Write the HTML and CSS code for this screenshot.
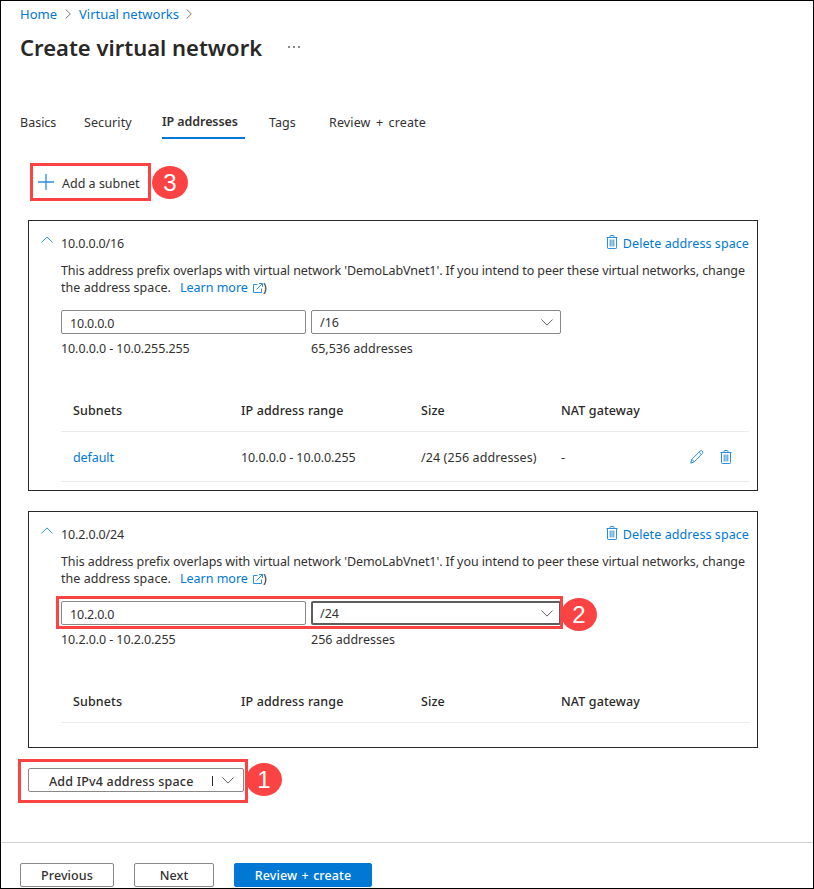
FILE: index.html
```html
<!DOCTYPE html>
<html lang="en">
<head>
<meta charset="utf-8">
<title>Create virtual network</title>
<link rel="stylesheet" href="styles.css">
</head>
<body>
<svg class="defs" width="0" height="0" aria-hidden="true">
  <symbol id="trash" viewBox="0 0 12 14"><path d="M.5 2.500h11M4 2.300V1.200q0-.7.7-.7h2.600q.7 0 .7.7v1.100M1.500 2.500v10.300q0 .7.7.7h7.600q.7 0 .7-.7V2.500M4.200 4.500v7M6 4.500v7M7.800 4.500v7"/></symbol>
  <symbol id="pencil" viewBox="0 0 14 14"><path d="M.8 13.200l1-3.900L10 1.100q1.200-1 2.300.1 1 1.100 0 2.300L4.200 11.900zM8.900 2.200l2.700 2.700M1.800 9.300l2.500 2.500"/></symbol>
  <symbol id="down" viewBox="0 0 12 7"><path d="M.4.500L6 6.100 11.600.5"/></symbol>
  <symbol id="up" viewBox="0 0 12 7"><path d="M.4 6.500L6 .9l5.600 5.600"/></symbol>
  <symbol id="right" viewBox="0 0 6 10"><path d="M.7.500L5.300 5 .7 9.500"/></symbol>
  <symbol id="external" viewBox="0 0 10 10"><path d="M4.500 1.500h-4v8h8V5.500M3.500 6.500l6-6M6 .5h3.500V4"/></symbol>
</svg>
<div class="page">
  <nav class="crumbs"><a class="c-home">Home</a><svg class="sep"><use href="#right"/></svg><a class="c-vnet">Virtual networks</a><svg class="sep"><use href="#right"/></svg></nav>
  <header class="heading"><h1>Create virtual network</h1><span class="more"><i></i><i></i><i></i></span></header>
  <div class="tabs">
    <span class="tab t1">Basics</span><span class="tab t2">Security</span><span class="tab t3 active">IP addresses</span><span class="tab t4">Tags</span><span class="tab t5">Review + create</span>
  </div>
  <div class="add-subnet callout"><svg class="plus" viewBox="0 0 16 16"><path d="M8 0v16M0 8h16"/></svg><span>Add a subnet</span><b class="badge b3">3</b></div>

  <section class="card first">
    <div class="card-head"><svg class="up"><use href="#up"/></svg><span class="prefix">10.0.0.0/16</span><a class="delete"><svg class="trash"><use href="#trash"/></svg><span>Delete address space</span></a></div>
    <p class="warning"><span class="w1">This address prefix overlaps with virtual network 'DemoLabVnet1'. If you intend to peer these virtual networks, change</span><br><span class="w2">the address space.</span><a>Learn more</a><svg class="external"><use href="#external"/></svg>)</p>
    <div class="fields"><div class="field address">10.0.0.0</div><div class="field size"><span>/16</span><svg class="down"><use href="#down"/></svg></div></div>
    <div class="hints"><span class="range">10.0.0.0 - 10.0.255.255</span><span>65,536 addresses</span></div>
    <div class="row head"><span>Subnets</span><span>IP address range</span><span>Size</span><span>NAT gateway</span></div>
    <div class="row data"><a class="range">default</a><span class="range">10.0.0.0 - 10.0.0.255</span><span class="sz">/24 (256 addresses)</span><span>-</span><svg class="pencil"><use href="#pencil"/></svg><svg class="trash"><use href="#trash"/></svg></div>
  </section>

  <section class="card second">
    <div class="card-head"><svg class="up"><use href="#up"/></svg><span class="prefix">10.2.0.0/24</span><a class="delete"><svg class="trash"><use href="#trash"/></svg><span>Delete address space</span></a></div>
    <p class="warning"><span class="w1">This address prefix overlaps with virtual network 'DemoLabVnet1'. If you intend to peer these virtual networks, change</span><br><span class="w2">the address space.</span><a>Learn more</a><svg class="external"><use href="#external"/></svg>)</p>
    <div class="fields"><div class="field address">10.2.0.0</div><div class="field size focus"><span>/24</span><svg class="down"><use href="#down"/></svg></div><div class="outline"></div><b class="badge b2">2</b></div>
    <div class="hints"><span class="range">10.2.0.0 - 10.2.0.255</span><span>256 addresses</span></div>
    <div class="row head"><span>Subnets</span><span>IP address range</span><span>Size</span><span>NAT gateway</span></div>
  </section>

  <div class="add-space callout"><div class="split"><span>Add IPv4 address space</span><i></i><svg class="down"><use href="#down"/></svg></div><b class="badge b1">1</b></div>
  <footer><button class="prev">Previous</button><button class="next">Next</button><button class="primary">Review + create</button></footer>
</div>
</body>
</html>
```
FILE: styles.css
```css
* { box-sizing: border-box; }
body { margin: 0; background: #fff; }
.defs { position: absolute; }
.page { width: 814px; height: 889px; border: 1px solid #000; overflow: hidden; font: 12.5px/20px "Noto Sans", "Open Sans", sans-serif; color: #323130; white-space: nowrap; }
svg { fill: none; stroke: #2b8fdd; stroke-width: 1; flex: none; }
a { color: #0078d4; }

.crumbs { display: flex; align-items: center; padding: 3px 0 0 19px; height: 23px; font-size: 13px; }
.c-home { width: 45px; }
.c-vnet { width: 107px; margin-left: 8px; }
.sep { width: 6px; height: 10px; stroke: #777; }
.heading { display: flex; align-items: center; height: 46px; padding-left: 19px; }
h1 { margin: 0; width: 268px; font-size: 22px; line-height: 32px; font-weight: 600; color: #292827; }
.more { display: flex; gap: 3px; }
.more i { width: 2px; height: 2px; background: #8a8a8a; }

.tabs { display: flex; height: 28px; margin-top: 41px; padding-left: 19px; }
.t1 { width: 64px; }
.t2 { width: 78px; letter-spacing: .1px; }
.t3 { width: 83px; margin-right: 24px; letter-spacing: -.08px; }
.t4 { width: 60px; }
.t5 { word-spacing: 2px; letter-spacing: .13px; }
.tab { padding-top: 2px; }
.tab.active { padding-top: 1px; font-weight: 600; border-bottom: 2px solid #0078d4; }

.callout { position: relative; border: 3px solid #fc4343; }
.badge { position: absolute; width: 36px; height: 33px; border-radius: 50%; background: #fc4343; color: #fff; font: 24px/33px "Liberation Sans", sans-serif; text-align: center; }
.add-subnet { display: flex; align-items: center; width: 121px; height: 38px; margin: 24px 0 0 29px; padding: 3px 0 0 5px; }
.plus { width: 16px; height: 16px; margin: -4px 8px 0 0; stroke-width: 1.3; }
.b3 { left: 119px; top: 0; }

.card { width: 730px; border: 1px solid #292827; margin-left: 27px; padding: 13px 8px 0 12px; }
.first { height: 271px; margin-top: 19px; }
.second { height: 237px; margin-top: 20px; }
.card-head { display: flex; align-items: center; height: 20px; }
.up { width: 12px; height: 7px; margin: -9px 8px 0 0; }
.prefix { letter-spacing: -.15px; }
.delete { display: flex; align-items: center; margin-left: auto; letter-spacing: .08px; }
.trash { width: 12px; height: 14px; }
.delete .trash { margin: -4px 5px 0 0; }
.warning { margin: 8px 0 0 20px; line-height: 17px; height: 34px; }
.w1 { letter-spacing: -.086px; }
.w2 { margin-right: 9px; letter-spacing: .04px; }
.external { width: 10px; height: 10px; margin-left: 5px; vertical-align: -1px; }
.fields { position: relative; display: flex; gap: 5px; margin: 14px 0 0 20px; }
.field { height: 24px; border: 1px solid #8a8886; border-radius: 2px; line-height: 25px; padding-left: 8px; }
.address { width: 245px; letter-spacing: -.2px; }
.size { display: flex; align-items: center; justify-content: space-between; width: 250px; padding-right: 7px; }
.size span { line-height: 20px; padding-top: 1px; }
.focus { border: 2px solid #605e5c; padding: 0 6px 0 7px; }
.down { width: 12px; height: 7px; stroke: #605e5c; }
.outline { position: absolute; left: -5px; top: -5px; width: 507px; height: 33px; border: 3px solid #fc4343; }
.b2 { left: 500px; top: -3px; }
.hints { display: grid; grid-template-columns: 250px 1fr; margin: 5px 0 0 20px; }
.range { letter-spacing: -.09px; }
.sz { letter-spacing: .1px; }
.row { display: grid; grid-template-columns: 168px 180px 140px 129px 30px 1fr; align-items: center; margin-left: 20px; padding: 2px 0 0 12px; border-bottom: 1px solid #edebe9; }
.head { height: 43px; margin-top: 30px; font-weight: 500; letter-spacing: .12px; color: #292827; }
.data { height: 50px; }
.data svg { margin-top: -2px; }
.pencil { width: 14px; height: 14px; }

.add-space { width: 230px; height: 44px; margin: 11px 0 0 17px; padding: 6px 7px; }
.split { display: flex; align-items: center; width: 216px; height: 24px; border: 1px solid #8a8886; border-radius: 2px; padding-left: 20px; font-weight: 500; }
.split span { width: 163px; letter-spacing: .18px; padding-top: 3px; }
.split i { width: 1px; height: 10px; margin: 2px 9px 0 0; background: #292827; }
.b1 { left: 225px; top: 1px; }
footer { display: flex; gap: 20px; margin-top: 39px; padding: 20px 0 0 19px; border-top: 1px solid #d2d0ce; }
button { height: 24px; padding: 1px 0 0; border: 1px solid #8a8886; border-radius: 2px; background: #fff; color: #323130; font: 500 12.5px/22px "Noto Sans", "Open Sans", sans-serif; letter-spacing: .1px; }
.prev { width: 94px; }
.next { width: 80px; }
.primary { width: 138px; background: #0078d4; border-color: #0078d4; color: #fff; word-spacing: 1px; }
```
